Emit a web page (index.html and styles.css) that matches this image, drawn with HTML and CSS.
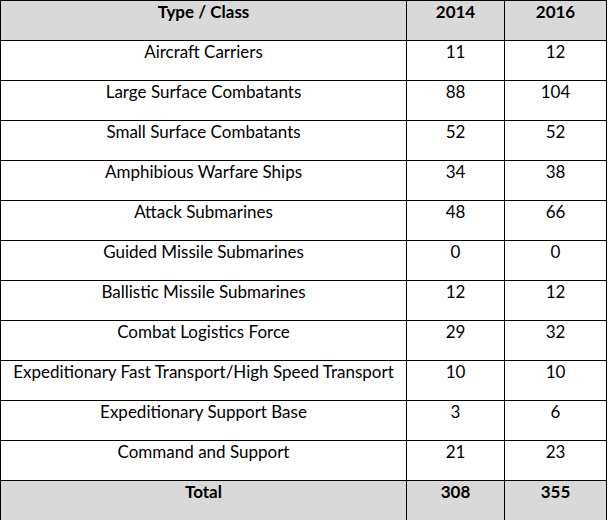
FILE: index.html
```html
<!DOCTYPE html>
<html>
<head>
<meta charset="utf-8">
<link rel="stylesheet" href="styles.css">
</head>
<body>
<table class="fleet">
  <colgroup>
    <col class="c-type">
    <col class="c-year">
    <col class="c-year2">
  </colgroup>
  <thead>
    <tr class="head"><th>Type / Class</th><th>2014</th><th>2016</th></tr>
  </thead>
  <tbody>
    <tr><td>Aircraft Carriers</td><td>11</td><td>12</td></tr>
    <tr><td>Large Surface Combatants</td><td>88</td><td>104</td></tr>
    <tr><td>Small Surface Combatants</td><td>52</td><td>52</td></tr>
    <tr><td>Amphibious Warfare Ships</td><td>34</td><td>38</td></tr>
    <tr><td>Attack Submarines</td><td>48</td><td>66</td></tr>
    <tr><td>Guided Missile Submarines</td><td>0</td><td>0</td></tr>
    <tr><td>Ballistic Missile Submarines</td><td>12</td><td>12</td></tr>
    <tr><td>Combat Logistics Force</td><td>29</td><td>32</td></tr>
    <tr><td>Expeditionary Fast Transport/High Speed Transport</td><td>10</td><td>10</td></tr>
    <tr><td>Expeditionary Support Base</td><td>3</td><td>6</td></tr>
    <tr><td>Command and Support</td><td>21</td><td>23</td></tr>
    <tr class="total"><th>Total</th><th>308</th><th>355</th></tr>
  </tbody>
</table>
</body>
</html>
```
FILE: styles.css
```css
html, body {
  margin: 0;
  padding: 0;
  background: #ffffff;
}
.fleet {
  border-collapse: collapse;
  table-layout: fixed;
  width: 606px;
  font-family: Lato, "Open Sans", sans-serif;
  font-size: 17px;
  color: #000000;
}
.c-type { width: 406px; }
.c-year { width: 98px; }
.c-year2 { width: 102px; }
.fleet th, .fleet td {
  border: 1px solid #000000;
  height: 40px;
  box-sizing: border-box;
  padding: 1px 2px 0 2px;
  vertical-align: top;
  text-align: center;
  line-height: 20px;
  white-space: nowrap;
}
.fleet th {
  font-weight: bold;
}
.head th, .total th {
  background: #d9d9d9;
}
```
